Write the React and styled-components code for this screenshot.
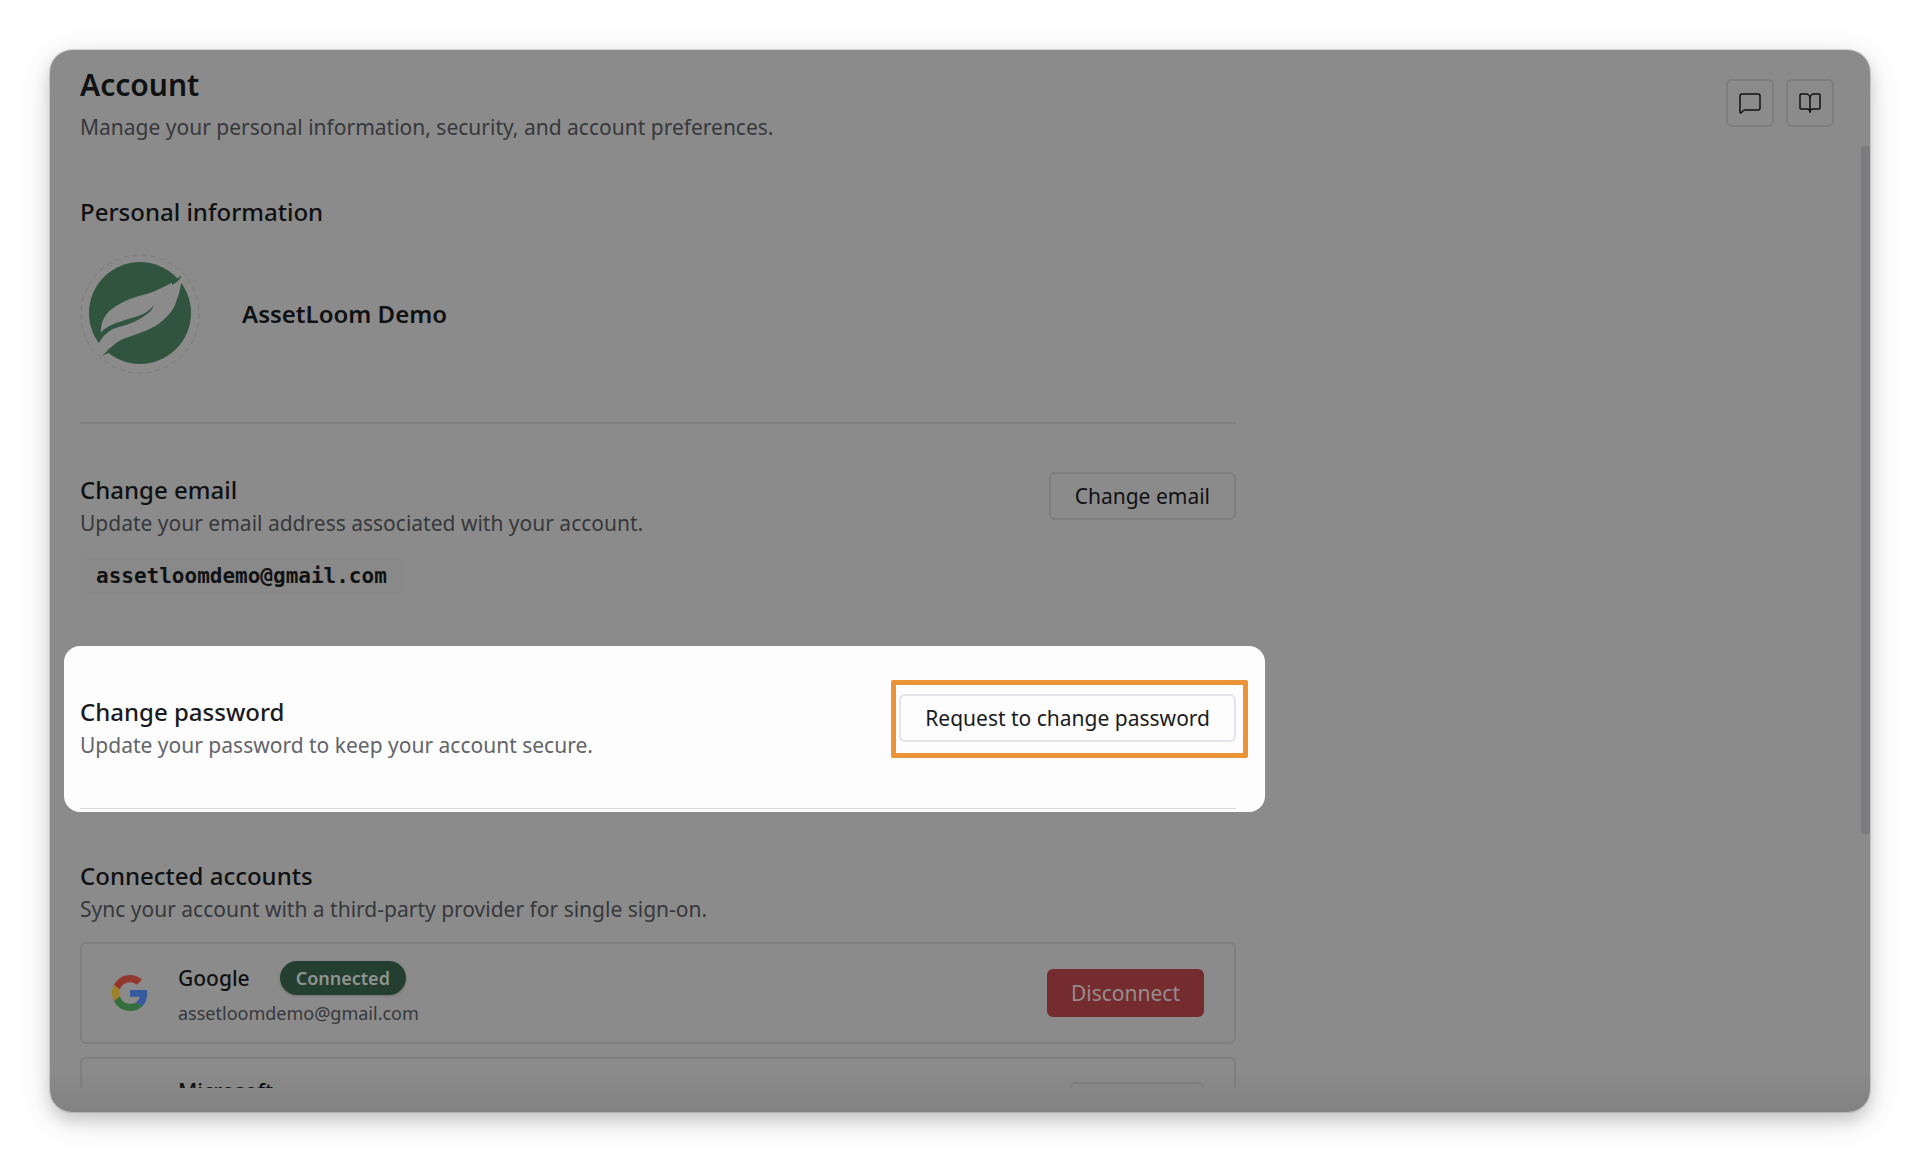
import React from 'react';
import styled, { createGlobalStyle, css } from 'styled-components';
import { MessageSquare, BookOpen } from 'lucide-react';

const providers = [
    { id: 'google', name: 'Google', email: 'assetloomdemo@gmail.com', connected: true },
    { id: 'microsoft', name: 'Microsoft', email: '', connected: false },
];

const Avatar = () => (
    <AvatarRing>
        <svg width="120" height="120" viewBox="0 0 120 120" role="img" aria-label="AssetLoom">
            <circle cx="60" cy="60" r="59" fill="none" stroke="#7a7a7a" strokeDasharray="5 4" />
            <circle cx="60" cy="59" r="51" fill="#31543f" />
            <path
                fill="#8b8b8b"
                d="M102 23 C90 30 82 34 75 37 C68 40 61 41 55 43.300 C47 46 41 49 35 52.700 C25 59 21 67 20.700 78.700 C24 75 27 73 31.700 71 C37 68 43 67 48.300 65 C54 63 58 62.500 63.300 60 C68 57.500 71 55 74 51 C72 56 70 58 66.700 60.300 C62 64 58 66 53.300 68.300 C47 71 41 72 35 74.300 C28 77 23 82 19.300 88.300 L13 97 L23.300 102 C26 98 28 95 31.700 92.700 C36 89 40 86 45 84.300 C52 81.500 58 80 65 77 C72 74 78 71 83.300 66 C89 61 93 56 95 51 C98 43 100 37 101 30 Z"
            />
            <path fill="#31543f" d="M92 27.500 Q98 25 100.500 21.500 L101 23 Q98 28 92 31 Z M22.500 102.500 Q25 97 31 96 L33 99 Q27 98 22.500 102.500 Z" />
        </svg>
    </AvatarRing>
);

const GoogleLogo = () => (
    <svg width="36" height="36" viewBox="0 0 48 48" aria-hidden="true">
        <path fill="#92382f" d="M24 9.500c3.540 0 6.710 1.220 9.210 3.600l6.850-6.850C35.900 2.380 30.470 0 24 0 14.620 0 6.510 5.380 2.560 13.220l7.980 6.190C12.430 13.720 17.740 9.500 24 9.500z" />
        <path fill="#385a9e" d="M46.980 24.550c0-1.570-.15-3.090-.38-4.550H24v9.020h12.940c-.58 2.960-2.260 5.480-4.780 7.180l7.730 6c4.510-4.180 7.090-10.360 7.090-17.650z" />
        <path fill="#a08028" d="M10.530 28.590c-.48-1.450-.76-2.990-.76-4.590s.27-3.140.76-4.590l-7.980-6.190C.92 16.460 0 20.120 0 24c0 3.880.92 7.540 2.560 10.780l7.970-6.190z" />
        <path fill="#336e3c" d="M24 48c6.480 0 11.930-2.130 15.890-5.810l-7.730-6c-2.150 1.450-4.920 2.300-8.160 2.300-6.260 0-11.570-4.220-13.470-9.910l-7.980 6.190C6.510 42.620 14.620 48 24 48z" />
    </svg>
);

const App = () => {
    return (
        <>
            <GlobalStyle />
            <Page>
                <Window>
                    <Header>
                        <div>
                            <PageTitle>Account</PageTitle>
                            <Muted>Manage your personal information, security, and account preferences.</Muted>
                        </div>
                        <HeaderActions>
                            <IconButton type="button" aria-label="Feedback">
                                <MessageSquare size={24} strokeWidth={1.5} />
                            </IconButton>
                            <IconButton type="button" aria-label="Documentation">
                                <BookOpen size={24} strokeWidth={1.5} />
                            </IconButton>
                        </HeaderActions>
                    </Header>

                    <Body>
                        <Content>
                            <ProfileSection>
                                <SectionTitle>Personal information</SectionTitle>
                                <Profile>
                                    <Avatar />
                                    <ProfileName>AssetLoom Demo</ProfileName>
                                </Profile>
                            </ProfileSection>

                            <EmailSection>
                                <SectionRow>
                                    <div>
                                        <SectionTitle>Change email</SectionTitle>
                                        <Muted>Update your email address associated with your account.</Muted>
                                    </div>
                                    <Button type="button">Change email</Button>
                                </SectionRow>
                                <EmailCode>assetloomdemo@gmail.com</EmailCode>
                            </EmailSection>

                            <Spotlight>
                                <SpotlightInner>
                                    <div>
                                        <SectionTitle $lit>Change password</SectionTitle>
                                        <Muted $lit>Update your password to keep your account secure.</Muted>
                                    </div>
                                    <Highlight>
                                        <Button type="button" $lit>Request to change password</Button>
                                    </Highlight>
                                </SpotlightInner>
                            </Spotlight>

                            <AccountsSection>
                                <SectionTitle>Connected accounts</SectionTitle>
                                <Muted>Sync your account with a third-party provider for single sign-on.</Muted>
                                <ProviderList>
                                    {providers.map((provider) => (
                                        <Provider key={provider.id}>
                                            <ProviderLogo>{provider.id === 'google' && <GoogleLogo />}</ProviderLogo>
                                            <ProviderInfo>
                                                <ProviderHead>
                                                    <ProviderName>{provider.name}</ProviderName>
                                                    {provider.connected && <Badge>Connected</Badge>}
                                                </ProviderHead>
                                                <ProviderEmail>{provider.email}</ProviderEmail>
                                            </ProviderInfo>
                                            {provider.connected ? (
                                                <DangerButton type="button">Disconnect</DangerButton>
                                            ) : (
                                                <ConnectButton type="button" aria-label={`Connect ${provider.name}`} />
                                            )}
                                        </Provider>
                                    ))}
                                </ProviderList>
                            </AccountsSection>
                        </Content>
                        <ScrollThumb />
                    </Body>
                </Window>
            </Page>
        </>
    );
};

export default App;

const GlobalStyle = createGlobalStyle`
  * {
    box-sizing: border-box;
  }
  body {
    margin: 0;
    background: #ffffff;
    font-family: "Noto Sans", "Open Sans", sans-serif;
    color: #101113;
  }
  h1, h2, p, ul {
    margin: 0;
    padding: 0;
  }
`;

const Page = styled.div`
  height: 100vh;
  padding: 50px;
`;

const Window = styled.main`
  display: flex;
  flex-direction: column;
  height: 100%;
  padding-bottom: 24px;
  overflow: hidden;
  border-radius: 22px;
  background: linear-gradient(to top, #828282, #8b8b8b 44px);
  box-shadow: 0 0 0 1px rgba(0, 0, 0, 0.12), 0 8px 16px rgba(0, 0, 0, 0.16), 0 8px 36px rgba(0, 0, 0, 0.12);
`;

const Header = styled.header`
  display: flex;
  flex: none;
  justify-content: space-between;
  align-items: flex-start;
  height: 96px;
  padding: 14px 36px 0 30px;
`;

const PageTitle = styled.h1`
  margin-bottom: 6px;
  font-size: 30px;
  font-weight: 600;
  line-height: 42px;
`;

const Muted = styled.p`
  font-size: 21px;
  line-height: 30px;
  color: ${({ $lit }) => ($lit ? '#636468' : '#37383b')};
`;

const HeaderActions = styled.div`
  display: flex;
  gap: 12px;
  padding-top: 15px;
`;

const buttonBase = css`
  flex: none;
  height: 48px;
  border: 2px solid #7e7e80;
  border-radius: 6px;
  background: transparent;
  color: #101113;
  font-family: inherit;
  font-size: 21px;
  line-height: 30px;
  cursor: pointer;
`;

const IconButton = styled.button`
  ${buttonBase}
  display: flex;
  align-items: center;
  justify-content: center;
  width: 48px;
  padding: 0;
`;

const Button = styled.button`
  ${buttonBase}
  padding: 0 24px;
  ${({ $lit }) => $lit && css`
    border-color: #e4e4ea;
    color: #1a1b1e;
  `}
`;

const ConnectButton = styled(Button)`
  min-width: 134px;
`;

const DangerButton = styled.button`
  ${buttonBase}
  padding: 0 24px;
  border: 0;
  background: #752c2f;
  color: #978c8d;
`;

const Body = styled.div`
  display: flex;
  flex: 1;
  justify-content: space-between;
  min-height: 0;
  overflow: hidden;
`;

const ScrollThumb = styled.div`
  flex: none;
  width: 9px;
  height: 73%;
  border-radius: 4px;
  background: #7c7c7e;
`;

const Content = styled.div`
  flex: 1;
  max-width: 1186px;
  padding-left: 30px;
`;

const SectionTitle = styled.h2`
  font-size: 24px;
  font-weight: 500;
  line-height: 36px;
  color: ${({ $lit }) => ($lit ? '#1a1b1e' : '#101113')};
`;

const ProfileSection = styled.section`
  padding: 48px 0;
  border-bottom: 2px solid #808081;
`;

const Profile = styled.div`
  display: flex;
  align-items: center;
  gap: 42px;
  padding-top: 24px;
`;

const AvatarRing = styled.div`
  display: flex;
  width: 120px;
  height: 120px;
`;

const ProfileName = styled.p`
  font-size: 24px;
  font-weight: 600;
  line-height: 36px;
`;

const SectionRow = styled.div`
  display: flex;
  align-items: flex-start;
  justify-content: space-between;
  gap: 24px;
`;

const EmailSection = styled.section`
  padding: 48px 0 52px;
`;

const EmailCode = styled.code`
  display: inline-block;
  margin-top: 20px;
  padding: 0 16px;
  border-radius: 6px;
  background: #898989;
  font-family: "DejaVu Sans Mono", "Liberation Mono", monospace;
  font-size: 21px;
  font-weight: 700;
  line-height: 36px;
`;

const Spotlight = styled.section`
  margin: 0 -29px 0 -16px;
  padding: 0 29px 3px 16px;
  border-radius: 16px;
  background: #fdfdfd;
`;

const SpotlightInner = styled(SectionRow)`
  padding: 48px 0;
  border-bottom: 1px solid #dcdce0;
`;

const Highlight = styled.div`
  position: relative;
  display: flex;

  &::after {
    content: "";
    position: absolute;
    inset: -14px -12px -16px -8px;
    border: 5px solid #eb9337;
    border-radius: 2px;
    pointer-events: none;
  }
`;

const AccountsSection = styled.section`
  padding-top: 46px;
`;

const ProviderList = styled.ul`
  display: flex;
  flex-direction: column;
  gap: 13px;
  padding-top: 18px;
  list-style: none;
`;

const Provider = styled.li`
  display: flex;
  align-items: center;
  padding: 16px 30px;
  border: 2px solid #7f7f80;
  border-radius: 6px;
`;

const ProviderLogo = styled.div`
  display: flex;
  flex: none;
  width: 66px;
`;

const ProviderInfo = styled.div`
  flex: 1;
`;

const ProviderHead = styled.div`
  display: flex;
  align-items: center;
  gap: 30px;
  padding: 1px 0;
`;

const ProviderName = styled.span`
  font-size: 21px;
  font-weight: 500;
  line-height: 30px;
`;

const Badge = styled.span`
  padding: 0 16px;
  border-radius: 17px;
  background: #243f30;
  box-shadow: 0 1px 3px rgba(0, 0, 0, 0.2);
  color: #8f9491;
  font-size: 18px;
  font-weight: 600;
  line-height: 34px;
`;

const ProviderEmail = styled.p`
  min-height: 26px;
  margin-top: 4px;
  font-size: 18px;
  line-height: 26px;
  color: #37383b;
`;
